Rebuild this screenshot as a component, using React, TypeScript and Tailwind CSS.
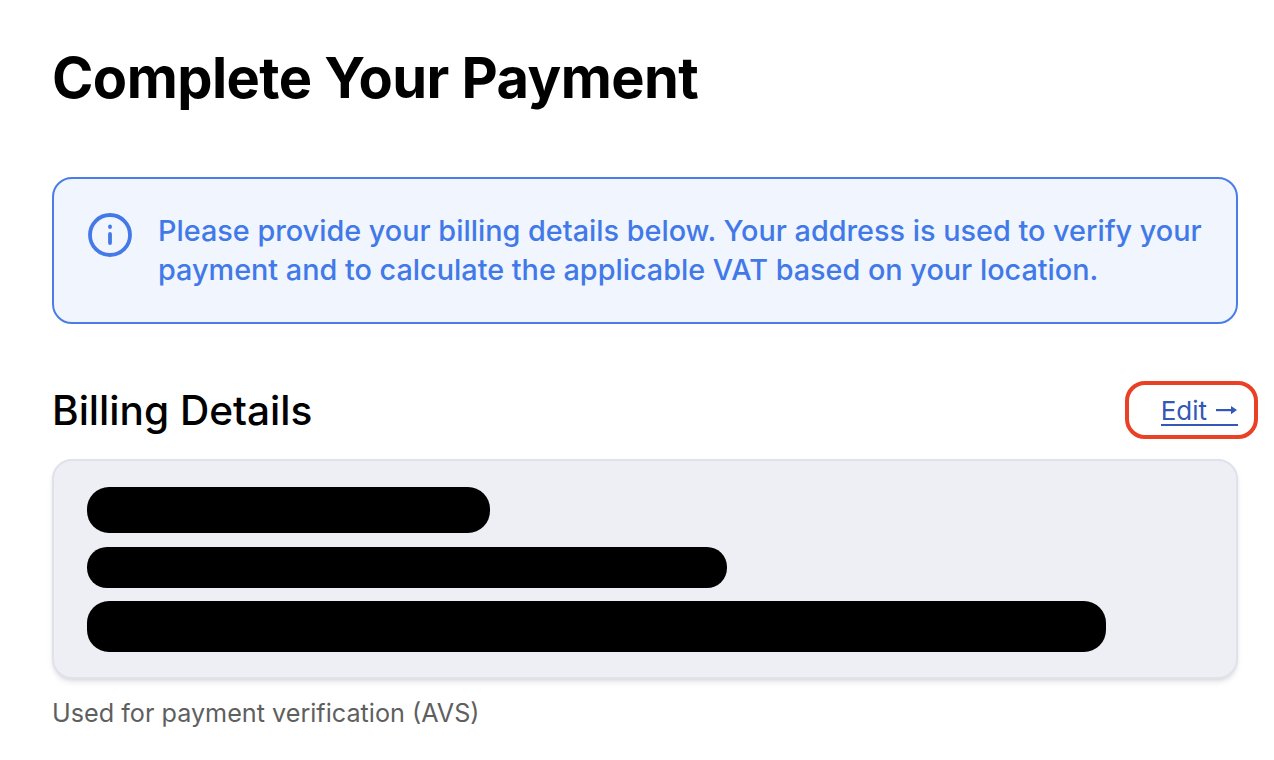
export default function App() {
  return (
    <div className="h-[760px] overflow-hidden bg-white pl-[52px] pr-[36px] pt-[40px] font-['Inter',sans-serif] text-black">
      <h1 className="text-[56px] leading-[76px] font-bold tracking-[-0.01em]">Complete Your Payment</h1>

      {/* Info banner */}
      <div className="mt-[61px] flex h-[147px] items-center gap-[25px] rounded-[20px] border-2 border-[#4a7de8] bg-[#f0f5fe] px-[33px] pb-[2px]">
        <svg className="mb-[30px] h-[46px] w-[46px] shrink-0" viewBox="0 0 46 46" fill="none" stroke="#4479e8" strokeWidth="3.8" strokeLinecap="round">
          <circle cx="23" cy="23" r="20" />
          <path d="M23 22v9" />
          <path d="M23 14.5v.5" />
        </svg>
        <p className="text-[28.8px] leading-[39px] font-medium text-[#4279e8]">
          Please provide your billing details below. Your address is used to verify your payment and to calculate the applicable VAT based on your location.
        </p>
      </div>

      {/* Billing details */}
      <div className="relative mt-[57px] flex items-center justify-between">
        <h2 className="text-[40.6px] leading-[60px] font-[450]">Billing Details</h2>
        <a className="inline-flex items-center gap-[9px] border-b-2 border-[#3457b8] pt-[2px] text-[26px] leading-[26px] text-[#3457b8]">
          Edit
          <svg className="mr-[1px] mt-[-3px] h-[14px] w-[21px]" viewBox="0 0 21 14" fill="#3457b8">
            <rect x="0" y="6" width="16" height="2.2" />
            <path d="M15 3 21 7.1 15 11.2z" />
          </svg>
        </a>
        <div className="absolute right-[-20px] top-[0px] h-[58px] w-[133px] rounded-[20px] border-4 border-[#ea4025]" />
      </div>

      <div className="mt-[18px] flex h-[220px] flex-col items-start rounded-[20px] border-2 border-[#dfe2ec] bg-[#eeeff5] pl-[33px] pt-[26px] shadow-md">
        <div className="h-[46px] w-[403px] rounded-[22px] bg-black" />
        <div className="mt-[14px] h-[41px] w-[640px] rounded-[20px] bg-black" />
        <div className="mt-[13px] h-[51px] w-[1019px] rounded-[22px] bg-black" />
      </div>

      <p className="mt-[17px] text-[25.2px] leading-[34px] text-[#5f5f5f]">Used for payment verification (AVS)</p>
    </div>
  );
}
